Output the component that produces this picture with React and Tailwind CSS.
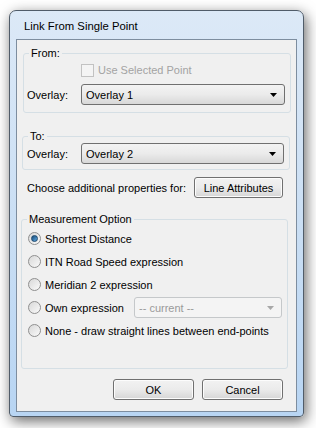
import React from 'react';

const Arrow = ({ disabled }) => (
  <svg width="7" height="4" viewBox="0 0 7 4" className="shrink-0">
    <path d="M0 0h7L3.5 4z" fill={disabled ? '#a8a8a8' : '#000'} />
  </svg>
);

const Combo = ({ value, width, disabled = false }) => (
  <div
    className={`h-[21px] flex items-center justify-between pl-[4px] pr-[7px] rounded-[3px] border ${
      disabled
        ? 'border-[#c5c8ca] bg-[#f4f4f4] text-[#9a9a9a]'
        : 'border-[#707070] bg-gradient-to-b from-[#f3f3f3] via-[#ebebeb] to-[#d8d8d8] text-black'
    }`}
    style={{ width }}
  >
    <span>{value}</span>
    <Arrow disabled={disabled} />
  </div>
);

const Button = ({ children, width }) => (
  <button
    className="h-[21px] flex items-center justify-center rounded-[3px] border border-[#707070] bg-gradient-to-b from-[#f2f2f2] via-[#ebebeb] to-[#d6d6d6] shadow-[inset_0_0_0_1px_#fcfcfc]"
    style={{ width }}
  >
    {children}
  </button>
);

const Radio = ({ checked }) => (
  <span className="w-[13px] h-[13px] rounded-full border border-[#8f8f8f] bg-gradient-to-br from-[#d8d8d8] to-[#fafafa] flex items-center justify-center shrink-0">
    {checked && (
      <span className="w-[7px] h-[7px] rounded-full bg-gradient-to-br from-[#174c7a] to-[#5ea9e3] border border-[#1a466b]" />
    )}
  </span>
);

const options = [
  'Shortest Distance',
  'ITN Road Speed expression',
  'Meridian 2 expression',
  'Own expression',
  'None - draw straight lines between end-points'
];

const App = () => {
  return (
    <div
      className="min-h-screen bg-white pt-[10px] pl-[9px] text-[11px] leading-[14px] text-black whitespace-nowrap"
      style={{ fontFamily: '"Liberation Sans", Arial, sans-serif' }}
    >
      <div className="w-[295px] h-[407px] flex flex-col rounded-t-[7px] rounded-b-[4px] border border-[#505c69] bg-gradient-to-b from-[#dce9f7] via-[#cbdff4] to-[#b8d5f3] px-[6px] pb-[4px] shadow-[2px_4px_14px_rgba(0,0,0,0.6)]">
        <div className="h-[28px] flex items-center pl-[8px] pt-[1px] text-[11.3px]">Link From Single Point</div>

        <div className="flex-1 border border-[#7d8d9f] bg-[#f0f0f0]">
          {/* From */}
          <fieldset className="mt-[6px] ml-[6px] w-[268px] border border-[#d5dfe5] rounded-[3px] pb-[7px]">
            <legend className="ml-[5px] px-[2px] leading-[14px]">From:</legend>
            <div className="mt-[3px] h-[14px] pl-[57px] flex items-center gap-[4px] text-[#a3a3a3]">
              <span className="w-[13px] h-[13px] border border-[#c2c2c2] bg-[#f4f4f4]" />
              <span>Use Selected Point</span>
            </div>
            <div className="mt-[7px] flex items-center">
              <span className="ml-[3px] w-[54px]">Overlay:</span>
              <Combo value="Overlay 1" width={204} />
            </div>
          </fieldset>

          {/* To */}
          <fieldset className="mt-[16px] ml-[5px] w-[268px] border border-[#d5dfe5] rounded-[3px] pb-[5px]">
            <legend className="ml-[5px] px-[2px] leading-[14px]">To:</legend>
            <div className="flex items-center">
              <span className="ml-[4px] w-[54px]">Overlay:</span>
              <Combo value="Overlay 2" width={203} />
            </div>
          </fieldset>

          <div className="mt-[7px] pl-[10px] pr-[13px] flex items-center justify-between">
            <span>Choose additional properties for:</span>
            <Button width={89}>Line Attributes</Button>
          </div>

          {/* Measurement */}
          <fieldset className="mt-[14px] ml-[4px] w-[267px] border border-[#d5dfe5] rounded-[3px] pb-[26px]">
            <legend className="ml-[5px] px-[2px] leading-[14px]">Measurement Option</legend>
            <div className="mt-[1px] flex flex-col">
              {options.map((label, i) => (
                <div key={label} className="h-[23px] pl-[6px] flex items-center gap-[4px]">
                  <Radio checked={i === 0} />
                  <span className={i === 3 ? 'w-[85px]' : ''}>{label}</span>
                  {i === 3 && <Combo value="-- current --" width={148} disabled />}
                </div>
              ))}
            </div>
          </fieldset>

          <div className="mt-[10px] pr-[13px] flex justify-end gap-[8px]">
            <Button width={81}>OK</Button>
            <Button width={81}>Cancel</Button>
          </div>
        </div>
      </div>
    </div>
  );
};

export default App;
